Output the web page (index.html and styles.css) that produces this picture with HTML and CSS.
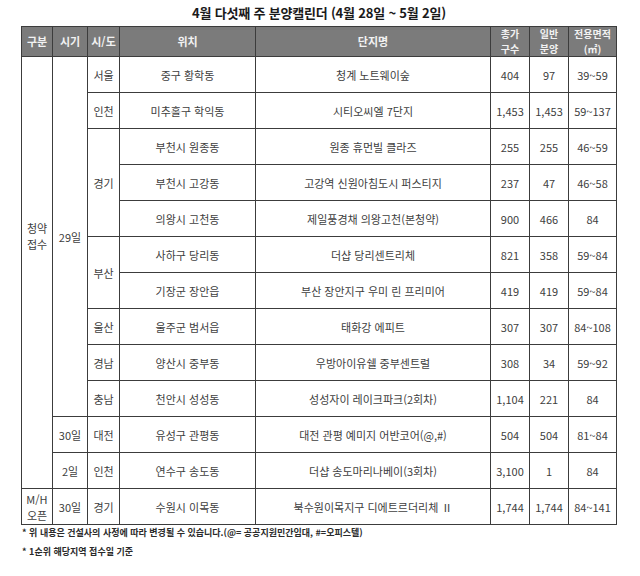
FILE: index.html
```html
<!DOCTYPE html>
<html lang="ko">
<head>
<meta charset="utf-8">
<link rel="stylesheet" href="styles.css">
</head>
<body>
<div class="page">
  <h1 class="title">4월 다섯째 주 분양캘린더 (4월 28일 ~ 5월 2일)</h1>
  <table class="cal">
    <colgroup>
      <col class="c-gubun"><col class="c-time"><col class="c-sido"><col class="c-loc"><col class="c-name"><col class="c-num"><col class="c-num"><col class="c-area">
    </colgroup>
    <thead>
      <tr>
        <th>구분</th><th>시기</th><th>시/도</th><th>위치</th><th>단지명</th><th><span class="hl">총가</span><span class="hl">구수</span></th><th><span class="hl">일반</span><span class="hl">분양</span></th><th><span class="hl">전용면적</span><span class="hl">(㎡)</span></th>
      </tr>
    </thead>
    <tbody>
      <tr><td rowspan="12" class="gubun-main">청약<br>접수</td><td rowspan="10">29일</td><td>서울</td><td>중구 황학동</td><td>청계 노트웨이숲</td><td>404</td><td>97</td><td>39~59</td></tr>
      <tr><td>인천</td><td>미추홀구 학익동</td><td>시티오씨엘 7단지</td><td>1,453</td><td>1,453</td><td>59~137</td></tr>
      <tr><td rowspan="3">경기</td><td>부천시 원종동</td><td>원종 휴먼빌 클라즈</td><td>255</td><td>255</td><td>46~59</td></tr>
      <tr><td>부천시 고강동</td><td>고강역 신원아침도시 퍼스티지</td><td>237</td><td>47</td><td>46~58</td></tr>
      <tr><td>의왕시 고천동</td><td>제일풍경채 의왕고천(본청약)</td><td>900</td><td>466</td><td>84</td></tr>
      <tr><td rowspan="2">부산</td><td>사하구 당리동</td><td>더샵 당리센트리체</td><td>821</td><td>358</td><td>59~84</td></tr>
      <tr><td>기장군 장안읍</td><td>부산 장안지구 우미 린 프리미어</td><td>419</td><td>419</td><td>59~84</td></tr>
      <tr><td>울산</td><td>울주군 범서읍</td><td>태화강 에피트</td><td>307</td><td>307</td><td>84~108</td></tr>
      <tr><td>경남</td><td>양산시 중부동</td><td>우방아이유쉘 중부센트럴</td><td>308</td><td>34</td><td>59~92</td></tr>
      <tr><td>충남</td><td>천안시 성성동</td><td>성성자이 레이크파크(2회차)</td><td>1,104</td><td>221</td><td>84</td></tr>
      <tr><td>30일</td><td>대전</td><td>유성구 관평동</td><td>대전 관평 예미지 어반코어(@,#)</td><td>504</td><td>504</td><td>81~84</td></tr>
      <tr><td>2일</td><td>인천</td><td>연수구 송도동</td><td>더샵 송도마리나베이(3회차)</td><td>3,100</td><td>1</td><td>84</td></tr>
      <tr><td>M/H<br>오픈</td><td>30일</td><td>경기</td><td>수원시 이목동</td><td>북수원이목지구 디에트르더리체 Ⅱ</td><td>1,744</td><td>1,744</td><td>84~141</td></tr>
    </tbody>
  </table>
  <p class="note">* 위 내용은 건설사의 사정에 따라 변경될 수 있습니다.(@= 공공지원민간임대, #=오피스텔)</p>
  <p class="note second">* 1순위 해당지역 접수일 기준</p>
</div>
</body>
</html>
```

FILE: styles.css
```css
html, body {
  margin: 0;
  padding: 0;
  background: #ffffff;
}

.page {
  width: 640px;
  height: 576px;
  padding: 4px 0 0 21px;
  box-sizing: border-box;
  font-family: "Noto Sans CJK KR", "Noto Sans", sans-serif;
  color: #3a3a3a;
}

.title {
  width: 596px;
  margin: 0;
  height: 22px;
  line-height: 18px;
  font-size: 13px;
  font-weight: 700;
  text-align: center;
  color: #1a1a1a;
  letter-spacing: -0.2px;
}

.cal {
  border-collapse: collapse;
  table-layout: fixed;
  width: 596px;
}

.c-gubun { width: 31px; }
.c-time { width: 35px; }
.c-sido { width: 32px; }
.c-loc { width: 136px; }
.c-name { width: 235px; }
.c-num { width: 39px; }
.c-area { width: 48px; }

.cal th,
.cal td {
  border: 1px solid #3c3c3c;
  padding: 0;
  text-align: center;
  vertical-align: middle;
  white-space: nowrap;
  overflow: hidden;
}

.cal th {
  background: #7b7b7b;
  color: #f2f2f2;
  font-size: 11px;
  font-weight: 700;
  line-height: 15px;
  height: 29px;
}

.hl {
  display: block;
  height: 14.5px;
  line-height: 14.5px;
  font-size: 10px;
}

.cal td {
  font-size: 11px;
  line-height: 16px;
  height: 35px;
  color: #404040;
}

.cal td.gubun-main {
  padding-bottom: 74px;
}

.note {
  margin: 1px 0 0 1px;
  font-size: 9px;
  line-height: 13px;
  font-weight: 700;
  color: #2a2a2a;
}

.note.second {
  margin-top: 6px;
}
```
